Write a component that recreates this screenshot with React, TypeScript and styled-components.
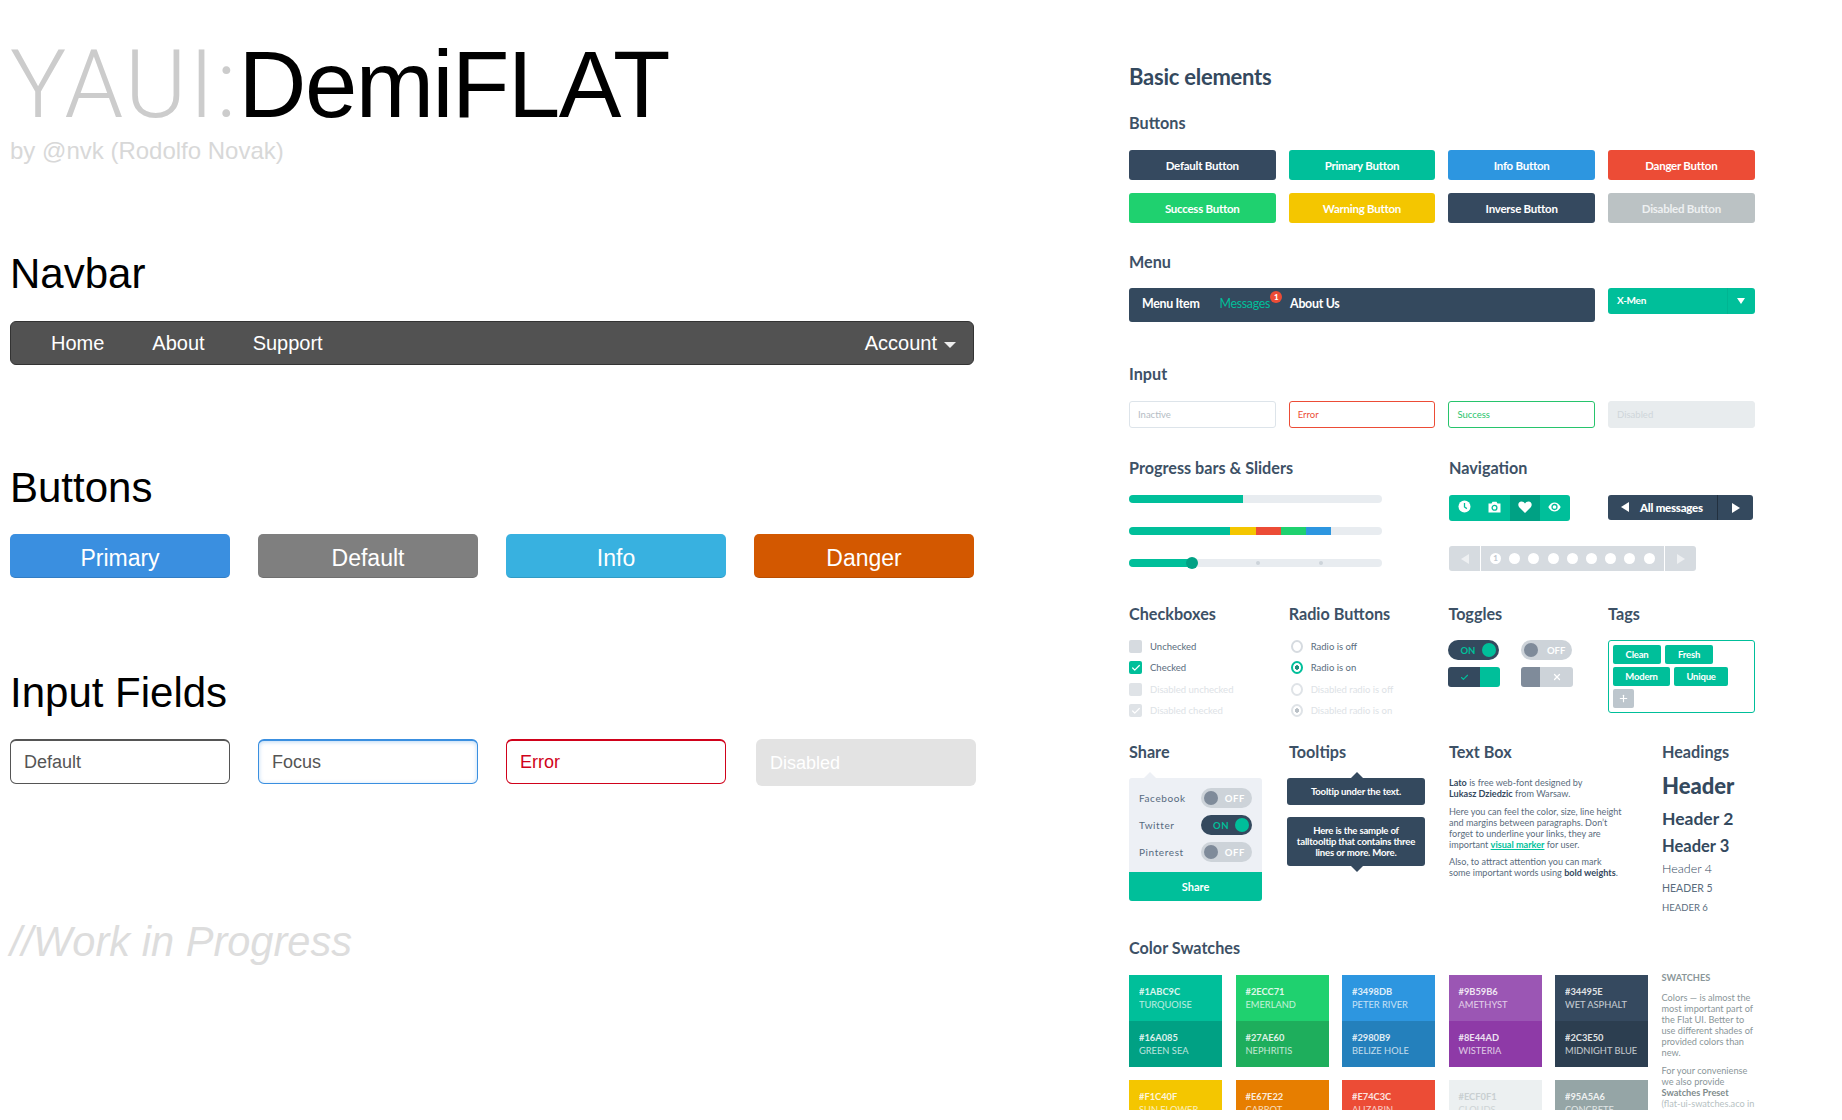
import React from 'react'
import styled, { createGlobalStyle } from 'styled-components'
import { Check, X, Plus } from 'lucide-react'

const GlobalStyle = createGlobalStyle`
  html, body { margin: 0; padding: 0; background: #fff; }
  * { box-sizing: border-box; }
`

const Page = styled.div`
  display: flex;
  width: 1842px;
  height: 1120px;
  overflow: hidden;
`

/* left column */
const LeftColumn = styled.div`
  width: 1129px;
  padding: 32px 0 0 10px;
  font-family: "Liberation Sans", Arial, sans-serif;
`

const Title = styled.h1`
  margin: 0;
  font-size: 94px;
  line-height: 106px;
  font-weight: 400;
  letter-spacing: -1.5px;
  color: #000;
  white-space: nowrap;
`

const TitleLight = styled.span`
  font-family: Roboto, sans-serif;
  font-weight: 300;
  color: #ccc;
  letter-spacing: 2.4px;
`

const Byline = styled.div`
  font-size: 24px;
  line-height: 28px;
  color: #d8d8d8;
  margin-top: -1px;
`

const SectionTitle = styled.h2<{ $top: number }>`
  margin: ${p => p.$top}px 0 0;
  font-size: 42px;
  line-height: 50px;
  font-weight: 400;
  color: #000;
`

const Navbar = styled.div`
  width: 964px;
  height: 44px;
  margin-top: 22px;
  padding: 0 17px 0 40px;
  display: flex;
  align-items: center;
  gap: 48px;
  background: #525252;
  border: 1px solid #333;
  border-radius: 6px;
`

const NavLink = styled.a<{ $right?: boolean }>`
  font-size: 20px;
  color: #fff;
  margin-left: ${p => (p.$right ? 'auto' : '0')};
  display: flex;
  align-items: center;
  gap: 7px;
`

const Caret = styled.span`
  width: 0;
  height: 0;
  margin-top: 4px;
  border-left: 6px solid transparent;
  border-right: 6px solid transparent;
  border-top: 6px solid #eee;
`

const FourUp = styled.div<{ $top: number }>`
  display: flex;
  gap: 28px;
  margin-top: ${p => p.$top}px;
`

const BigButton = styled.button<{ $bg: string }>`
  width: 220px;
  height: 44px;
  padding: 5px 0 0;
  border: 0;
  border-radius: 5px;
  border-bottom: 1px solid rgba(0, 0, 0, 0.12);
  background: ${p => p.$bg};
  color: #fff;
  font: 23px "Liberation Sans", Arial, sans-serif;
`

const BigInput = styled.div<{ $border?: string; $color?: string; $glow?: boolean }>`
  width: 220px;
  height: 45px;
  padding: 1px 0 0 13px;
  display: flex;
  align-items: center;
  border: 1px solid ${p => p.$border || '#555'};
  border-top-width: 2px;
  border-radius: 6px;
  color: ${p => p.$color || '#555'};
  font-size: 18px;
  ${p => (p.$glow ? 'box-shadow: inset 0 1px 4px rgba(58, 143, 224, 0.35);' : '')}
`

const BigInputDisabled = styled(BigInput)`
  margin-left: 2px;
  height: 47px;
  padding-left: 14px;
  border: 0;
  background: #e3e3e3;
  color: #fff;
`

const WorkInProgress = styled.div`
  margin-top: 131px;
  font-size: 41.6px;
  line-height: 50px;
  font-style: italic;
  color: #ddd;
`

/* right column */
const RightColumn = styled.div`
  width: 680px;
  height: 1110px;
  padding-top: 63px;
  overflow: hidden;
  font-family: Lato, sans-serif;
  color: #34495e;
`

const MainTitle = styled.h2`
  margin: 0;
  font-size: 22px;
  line-height: 28px;
  font-weight: 700;
  letter-spacing: -0.25px;
`

const SubTitle = styled.h3<{ $top?: number; $bottom?: number }>`
  margin: ${p => p.$top ?? 0}px 0 ${p => (p.$bottom ?? 17) + 1}px;
  font-size: 16.2px;
  line-height: 19px;
  font-weight: 700;
  color: #3d5166;
  white-space: nowrap;
`

const Grid4 = styled.div<{ $rowGap?: number; $top?: number }>`
  display: grid;
  width: 626px;
  grid-template-columns: repeat(4, 146.5px);
  column-gap: 13.2px;
  row-gap: ${p => p.$rowGap ?? 0}px;
  margin-top: ${p => p.$top ?? 0}px;
`

const FlatButton = styled.div<{ $bg: string; $fg?: string }>`
  height: 30px;
  display: flex;
  align-items: center;
  justify-content: center;
  border-radius: 3px;
  background: ${p => p.$bg};
  color: ${p => p.$fg || '#fff'};
  font-size: 11.5px;
  font-weight: 700;
  letter-spacing: -0.25px;
`

const MenuRow = styled.div`
  display: flex;
  gap: 13px;
  align-items: flex-start;
`

const MenuBar = styled.div`
  width: 466px;
  height: 34px;
  padding: 0 0 4px 13px;
  display: flex;
  align-items: center;
  border-radius: 3px;
  background: #34495e;
  color: #fff;
  font-size: 12.4px;
  font-weight: 700;
  letter-spacing: -0.3px;
`

const MenuItem = styled.span<{ $active?: boolean; $gap: number }>`
  margin-right: ${p => p.$gap}px;
  color: ${p => (p.$active ? '#00bf9a' : '#fff')};
  font-weight: ${p => (p.$active ? 400 : 700)};
  position: relative;
`

const Badge = styled.span`
  position: absolute;
  top: -5px;
  right: -12px;
  width: 12px;
  height: 12px;
  border-radius: 50%;
  background: #ec4c36;
  color: #fff;
  font-size: 8px;
  font-weight: 900;
  line-height: 12px;
  text-align: center;
`

const SelectBox = styled.div`
  width: 147px;
  height: 26px;
  display: flex;
  align-items: stretch;
  border-radius: 3px;
  background: #00bf9a;
  color: #fff;
  font-size: 10px;
  font-weight: 700;
  letter-spacing: -0.3px;
`

const SelectLabel = styled.span`
  flex: 1;
  padding: 0 0 2px 9px;
  display: flex;
  align-items: center;
`

const SelectArrow = styled.span`
  width: 28px;
  display: flex;
  align-items: center;
  justify-content: center;
  padding-right: 2px;
  border-left: 1px solid #00b592;
`

const DownTriangle = styled.span`
  border-left: 4px solid transparent;
  border-right: 4px solid transparent;
  border-top: 6px solid #fff;
`

const FlatInput = styled.div<{ $border?: string; $fg?: string; $bg?: string }>`
  height: 27px;
  padding-left: 8px;
  display: flex;
  align-items: center;
  border-radius: 3px;
  border: 1px solid ${p => p.$border || '#dde4ea'};
  color: ${p => p.$fg || '#b4bcc4'};
  background: ${p => p.$bg || '#fff'};
  font-size: 9.5px;
`

const TwoUp = styled.div`
  display: grid;
  grid-template-columns: 253px 1fr;
  column-gap: 67px;
  margin-top: 30px;
`

const TrackStack = styled.div`
  display: flex;
  flex-direction: column;
  gap: 24px;
`

const Track = styled.div`
  width: 253px;
  height: 8px;
  display: flex;
  border-radius: 4px;
  background: #e8ecf0;
  position: relative;
`

const TrackPart = styled.div<{ $bg: string; $w: number; $first?: boolean }>`
  width: ${p => p.$w}px;
  background: ${p => p.$bg};
  border-radius: ${p => (p.$first ? '4px 0 0 4px' : '0')};
`

const SliderHandle = styled.span`
  position: absolute;
  left: 57px;
  top: -2px;
  width: 12px;
  height: 12px;
  border-radius: 50%;
  background: #00a184;
`

const SliderTick = styled.span<{ $x: number }>`
  position: absolute;
  left: ${p => p.$x}px;
  top: 2px;
  width: 4px;
  height: 4px;
  border-radius: 50%;
  background: #cdd4da;
`

const NavColumns = styled.div`
  display: flex;
  flex-direction: column;
  gap: 25px;
`

const NavTop = styled.div`
  display: flex;
  gap: 38px;
`

const IconBar = styled.div`
  width: 121px;
  height: 26px;
  display: flex;
  border-radius: 3px;
  overflow: hidden;
  background: #00bf9a;
`

const IconCell = styled.span<{ $active?: boolean }>`
  flex: 1;
  display: flex;
  align-items: center;
  justify-content: center;
  padding-bottom: 3px;
  background: ${p => (p.$active ? '#00a184' : 'transparent')};
`

const MessagesBar = styled.div`
  width: 145px;
  height: 25px;
  display: flex;
  align-items: stretch;
  border-radius: 3px;
  background: #34495e;
  color: #fff;
  font-size: 11.5px;
  font-weight: 900;
  letter-spacing: -0.25px;
`

const MessagesLabel = styled.span`
  width: 110px;
  padding: 0 0 1px 13px;
  display: flex;
  align-items: center;
  gap: 11px;
  white-space: nowrap;
  border-right: 1px solid #22303f;
`

const MessagesNext = styled.span`
  flex: 1;
  display: flex;
  align-items: center;
  justify-content: center;
`

const Triangle = styled.span<{ $dir: 'left' | 'right'; $color: string; $size: number }>`
  width: 0;
  height: 0;
  border-top: ${p => p.$size}px solid transparent;
  border-bottom: ${p => p.$size}px solid transparent;
  ${p => (p.$dir === 'left' ? 'border-right' : 'border-left')}: ${p => p.$size * 1.6}px solid ${p => p.$color};
`

const Pager = styled.div`
  width: 247px;
  height: 25px;
  display: flex;
  align-items: center;
  border-radius: 3px;
  background: #d6dbe0;
`

const PagerEnd = styled.span<{ $left?: boolean }>`
  width: 32px;
  height: 25px;
  display: flex;
  align-items: center;
  justify-content: center;
  ${p => (p.$left ? 'border-right: 1px solid #fff;' : 'border-left: 1px solid #fff;')}
`

const PagerDots = styled.span`
  flex: 1;
  display: flex;
  align-items: center;
  gap: 8.2px;
  padding-left: 9px;
`

const PagerDot = styled.span`
  width: 11px;
  height: 11px;
  border-radius: 50%;
  background: #fff;
  color: #c2c9d0;
  font-size: 8px;
  font-weight: 900;
  line-height: 11px;
  text-align: center;
`

const OptionList = styled.div`
  margin-top: -4px;
  height: 76px;
`

const OptionRow = styled.div<{ $disabled?: boolean }>`
  height: 21.3px;
  display: flex;
  align-items: center;
  gap: 8px;
  font-size: 9.5px;
  white-space: nowrap;
  color: ${p => (p.$disabled ? '#dde2e6' : '#5a6c7d')};
`

const CheckMark = styled.span<{ $on?: boolean; $disabled?: boolean }>`
  width: 13px;
  height: 13px;
  flex: none;
  display: flex;
  align-items: center;
  justify-content: center;
  border-radius: 2px;
  background: ${p => (p.$on && !p.$disabled ? '#00bf9a' : p.$disabled ? '#dfe3e7' : '#d6dbe0')};
`

const RadioMark = styled.span<{ $color: string; $dot?: string; $width: number }>`
  width: 12px;
  height: 13px;
  flex: none;
  margin-left: 2px;
  border-radius: 50%;
  border: ${p => p.$width}px solid ${p => p.$color};
  background: ${p => (p.$dot ? `radial-gradient(circle, ${p.$dot} 0 2px, #fff 2.4px)` : '#fff')};
`

const ToggleGrid = styled.div`
  display: grid;
  grid-template-columns: 52px 52px;
  column-gap: 21px;
  row-gap: 7px;
`

const Pill = styled.div<{ $on?: boolean }>`
  width: 51px;
  height: 20px;
  padding: 0 3px 0 ${p => (p.$on ? '12px' : '3px')};
  display: flex;
  align-items: center;
  justify-content: space-between;
  border-radius: 10px;
  background: ${p => (p.$on ? '#34495e' : '#cdd3d9')};
  color: ${p => (p.$on ? '#00bf9a' : '#fff')};
  font-size: 9.5px;
  font-weight: 700;
`

const PillKnob = styled.span<{ $on?: boolean }>`
  width: 14px;
  height: 14px;
  border-radius: 50%;
  background: ${p => (p.$on ? '#00bf9a' : '#7f8b9a')};
`

const PillText = styled.span<{ $on?: boolean }>`
  margin-right: ${p => (p.$on ? '0' : '4px')};
`

const SquareToggle = styled.div`
  width: 52px;
  height: 20px;
  display: flex;
  border-radius: 3px;
  overflow: hidden;
`

const SquareHalf = styled.span<{ $bg: string; $w: number }>`
  width: ${p => p.$w}px;
  display: flex;
  align-items: center;
  justify-content: center;
  background: ${p => p.$bg};
`

const TagBox = styled.div`
  height: 73px;
  padding: 4px;
  display: flex;
  flex-wrap: wrap;
  align-content: flex-start;
  gap: 3px 4px;
  border: 1px solid #00bf9a;
  border-radius: 3px;
`

const Tag = styled.span<{ $w: number }>`
  width: ${p => p.$w}px;
  height: 19px;
  display: flex;
  align-items: center;
  justify-content: center;
  border-radius: 2px;
  background: #00bf9a;
  color: #fff;
  font-size: 9.5px;
  font-weight: 700;
  letter-spacing: -0.2px;
`

const TagAdd = styled.span`
  width: 21px;
  height: 19px;
  display: flex;
  align-items: center;
  justify-content: center;
  border-radius: 2px;
  background: #bdc6cd;
`

const LowerGrid = styled.div`
  display: grid;
  width: 626px;
  grid-template-columns: 147px 147px 200px 1fr;
  column-gap: 13px;
  margin-top: 29px;
`

const ShareCard = styled.div`
  width: 133px;
  height: 123px;
  display: flex;
  flex-direction: column;
  border-radius: 3px;
  background: #edf0f5;
  position: relative;
  &::before {
    content: '';
    position: absolute;
    left: 15px;
    top: -6px;
    border-left: 6px solid transparent;
    border-right: 6px solid transparent;
    border-bottom: 6px solid #edf0f5;
  }
`

const ShareRows = styled.div`
  flex: 1;
  padding: 10px 10px 0;
  display: flex;
  flex-direction: column;
  gap: 7px;
`

const ShareRow = styled.div`
  display: flex;
  align-items: center;
  justify-content: space-between;
  font-size: 10px;
  letter-spacing: 0.6px;
  color: #566a7e;
`

const ShareButton = styled.div`
  height: 29px;
  display: flex;
  align-items: center;
  justify-content: center;
  border-radius: 0 0 3px 3px;
  background: #00bf9a;
  color: #fff;
  font-size: 11px;
  font-weight: 700;
`

const TipStack = styled.div`
  width: 138px;
  margin-left: -2px;
  display: flex;
  flex-direction: column;
  gap: 12px;
`

const Tip = styled.div<{ $pointer: 'up' | 'down'; $h: number }>`
  height: ${p => p.$h}px;
  padding: 0 8px;
  display: flex;
  align-items: center;
  justify-content: center;
  text-align: center;
  border-radius: 3px;
  background: #34495e;
  color: #fff;
  font-size: 9.6px;
  line-height: 11px;
  font-weight: 700;
  letter-spacing: -0.2px;
  position: relative;
  &::after {
    content: '';
    position: absolute;
    left: 64px;
    ${p => (p.$pointer === 'up' ? 'top: -6px;' : 'bottom: -6px;')}
    border-left: 6px solid transparent;
    border-right: 6px solid transparent;
    ${p => (p.$pointer === 'up' ? 'border-bottom' : 'border-top')}: 6px solid #34495e;
  }
`

const TextCopy = styled.div`
  width: 190px;
  margin-top: -1px;
  font-size: 9.1px;
  line-height: 11px;
  color: #5a6c7d;
`

const CopyPara = styled.p`
  margin: 0 0 6.5px;
  white-space: nowrap;
`

const Strong = styled.b`
  font-weight: 700;
  color: #34495e;
`

const MarkerLink = styled.a`
  color: #00bf9a;
  font-weight: 700;
  text-decoration: underline;
`

const HeadingStack = styled.div`
  margin-top: -10px;
  height: 123px;
`

const SampleHeading = styled.div<{ $size: number; $weight: number; $h: number; $light?: boolean }>`
  font-size: ${p => p.$size}px;
  font-weight: ${p => p.$weight};
  line-height: ${p => p.$h}px;
  color: ${p => (p.$light ? '#5a6c7d' : '#34495e')};
  white-space: nowrap;
`

const SwatchGrid = styled.div`
  display: grid;
  grid-template-columns: repeat(5, 93px) 110px;
  grid-auto-rows: 92px;
  column-gap: 13.5px;
  row-gap: 13px;
`

const SwatchCell = styled.div`
  display: flex;
  flex-direction: column;
`

const SwatchPart = styled.div<{ $bg: string; $fg?: string }>`
  height: 46px;
  padding: 10px 0 0 10px;
  background: ${p => p.$bg};
  color: ${p => p.$fg || '#fff'};
  font-size: 9.3px;
  line-height: 13px;
`

const SwatchHex = styled.div`
  font-weight: 700;
  opacity: 0.85;
`

const SwatchName = styled.div`
  opacity: 0.72;
  white-space: nowrap;
`

const SwatchNotes = styled.div`
  grid-column: 6;
  grid-row: 1 / span 2;
  margin-top: -3px;
  font-size: 9.2px;
  line-height: 11px;
  color: #8a9699;
  white-space: nowrap;
`

const NotesTitle = styled.div`
  margin-bottom: 9px;
  font-weight: 700;
`

const NotesPara = styled.p`
  margin: 0 0 7px;
`

const NotesStrong = styled.b`
  font-weight: 700;
  color: #7f8c8d;
`

const NotesFaint = styled.span`
  color: #b6bfc2;
`

const swatches = [
  [['#00bf9a', '#1ABC9C', 'TURQUOISE'], ['#00a184', '#16A085', 'GREEN SEA']],
  [['#1fd16f', '#2ECC71', 'EMERLAND'], ['#1eae5c', '#27AE60', 'NEPHRITIS']],
  [['#2d96e0', '#3498DB', 'PETER RIVER'], ['#2480bc', '#2980B9', 'BELIZE HOLE']],
  [['#9b56b4', '#9B59B6', 'AMETHYST'], ['#8e3aa7', '#8E44AD', 'WISTERIA']],
  [['#35495f', '#34495E', 'WET ASPHALT'], ['#2c3e50', '#2C3E50', 'MIDNIGHT BLUE']],
  [['#f4c600', '#F1C40F', 'SUN FLOWER'], ['#f0ab00', '#F39C12', 'ORANGE']],
  [['#e77e00', '#E67E22', 'CARROT'], ['#d35400', '#D35400', 'PUMPKIN']],
  [['#ec4c36', '#E74C3C', 'ALIZARIN'], ['#c0392b', '#C0392B', 'POMEGRANATE']],
  [['#ecf0f1', '#ECF0F1', 'CLOUDS'], ['#bdc3c7', '#BDC3C7', 'SILVER']],
  [['#95a5a6', '#95A5A6', 'CONCRETE'], ['#7f8c8d', '#7F8C8D', 'ASBESTOS']],
]

function Toggle({ on }: { on?: boolean }) {
  return on ? (
    <Pill $on>
      <PillText $on>ON</PillText>
      <PillKnob $on />
    </Pill>
  ) : (
    <Pill>
      <PillKnob />
      <PillText>OFF</PillText>
    </Pill>
  )
}

const ClockIcon = () => (
  <svg width="13" height="13" viewBox="0 0 13 13">
    <circle cx="6.5" cy="6.5" r="6" fill="#fff" />
    <path d="M6.5 3v4l2.4 1.6" fill="none" stroke="#00bf9a" strokeWidth="1.3" />
  </svg>
)

const CameraIcon = () => (
  <svg width="13" height="12" viewBox="0 0 13 12">
    <path d="M0.5 2.5h3l1-1.8h4l1 1.8h3v9h-12z" fill="#fff" />
    <circle cx="6.5" cy="6.8" r="2.4" fill="none" stroke="#00bf9a" strokeWidth="1.3" />
  </svg>
)

const HeartIcon = () => (
  <svg width="14" height="12" viewBox="0 0 14 12">
    <path d="M7 12L1.2 6.2C-0.6 4.2 0.4 0.6 3.5 0.5 5 0.5 6.3 1.3 7 2.6 7.7 1.3 9 0.5 10.5 0.5c3.1 0.1 4.1 3.7 2.3 5.7z" fill="#fff" />
  </svg>
)

const EyeIcon = () => (
  <svg width="13" height="10" viewBox="0 0 13 10">
    <path d="M0.3 5C2 1.7 4.2 0.5 6.5 0.5S11 1.7 12.7 5C11 8.3 8.8 9.5 6.5 9.5S2 8.3 0.3 5z" fill="#fff" />
    <circle cx="6.5" cy="5" r="2.5" fill="none" stroke="#00bf9a" strokeWidth="1.3" />
  </svg>
)

export default function App() {
  return (
    <Page>
      <GlobalStyle />
      <LeftColumn>
        <Title>
          <TitleLight>YAUI:</TitleLight>DemiFLAT
        </Title>
        <Byline>by @nvk (Rodolfo Novak)</Byline>

        <SectionTitle $top={84}>Navbar</SectionTitle>
        <Navbar>
          <NavLink>Home</NavLink>
          <NavLink>About</NavLink>
          <NavLink>Support</NavLink>
          <NavLink $right>
            Account <Caret />
          </NavLink>
        </Navbar>

        <SectionTitle $top={98}>Buttons</SectionTitle>
        <FourUp $top={21}>
          <BigButton $bg="#3a8fe0">Primary</BigButton>
          <BigButton $bg="#7f7f7f">Default</BigButton>
          <BigButton $bg="#38b1e0">Info</BigButton>
          <BigButton $bg="#d35800">Danger</BigButton>
        </FourUp>

        <SectionTitle $top={90}>Input Fields</SectionTitle>
        <FourUp $top={21}>
          <BigInput>Default</BigInput>
          <BigInput $border="#3a8fe0" $glow>
            Focus
          </BigInput>
          <BigInput $border="#d0021b" $color="#d0021b">
            Error
          </BigInput>
          <BigInputDisabled>Disabled</BigInputDisabled>
        </FourUp>

        <WorkInProgress>//Work in Progress</WorkInProgress>
      </LeftColumn>

      <RightColumn>
        <MainTitle>Basic elements</MainTitle>

        <SubTitle $top={22}>Buttons</SubTitle>
        <Grid4 $rowGap={13}>
          <FlatButton $bg="#35495f">Default Button</FlatButton>
          <FlatButton $bg="#00bf9a">Primary Button</FlatButton>
          <FlatButton $bg="#2d96e0">Info Button</FlatButton>
          <FlatButton $bg="#ec4c36">Danger Button</FlatButton>
          <FlatButton $bg="#1fd16f">Success Button</FlatButton>
          <FlatButton $bg="#f4c600">Warning Button</FlatButton>
          <FlatButton $bg="#35495f">Inverse Button</FlatButton>
          <FlatButton $bg="#bbc2c4" $fg="#eef0f1">
            Disabled Button
          </FlatButton>
        </Grid4>

        <SubTitle $top={29} $bottom={16}>
          Menu
        </SubTitle>
        <MenuRow>
          <MenuBar>
            <MenuItem $gap={20}>Menu Item</MenuItem>
            <MenuItem $gap={20} $active>
              Messages
              <Badge>1</Badge>
            </MenuItem>
            <MenuItem $gap={0}>About Us</MenuItem>
          </MenuBar>
          <SelectBox>
            <SelectLabel>X-Men</SelectLabel>
            <SelectArrow>
              <DownTriangle />
            </SelectArrow>
          </SelectBox>
        </MenuRow>

        <SubTitle $top={42}>Input</SubTitle>
        <Grid4>
          <FlatInput>Inactive</FlatInput>
          <FlatInput $border="#ec4c36" $fg="#ec4c36">
            Error
          </FlatInput>
          <FlatInput $border="#27c46c" $fg="#27c46c">
            Success
          </FlatInput>
          <FlatInput $border="#e8ecee" $bg="#e8ecee" $fg="#cfd6da">
            Disabled
          </FlatInput>
        </Grid4>

        <TwoUp>
          <div>
            <SubTitle>Progress bars &amp; Sliders</SubTitle>
            <TrackStack>
              <Track>
                <TrackPart $bg="#00bf9a" $w={114} $first />
              </Track>
              <Track>
                <TrackPart $bg="#00bf9a" $w={101} $first />
                <TrackPart $bg="#f4c600" $w={26} />
                <TrackPart $bg="#ec4c36" $w={25} />
                <TrackPart $bg="#1fd16f" $w={25} />
                <TrackPart $bg="#2d96e0" $w={25} />
              </Track>
              <Track>
                <TrackPart $bg="#00bf9a" $w={62} $first />
                <SliderTick $x={127} />
                <SliderTick $x={190} />
                <SliderHandle />
              </Track>
            </TrackStack>
          </div>
          <div>
            <SubTitle>Navigation</SubTitle>
            <NavColumns>
              <NavTop>
                <IconBar>
                  <IconCell><ClockIcon /></IconCell>
                  <IconCell><CameraIcon /></IconCell>
                  <IconCell $active><HeartIcon /></IconCell>
                  <IconCell><EyeIcon /></IconCell>
                </IconBar>
                <MessagesBar>
                  <MessagesLabel>
                    <Triangle $dir="left" $color="#fff" $size={5} />
                    All messages
                  </MessagesLabel>
                  <MessagesNext>
                    <Triangle $dir="right" $color="#fff" $size={5} />
                  </MessagesNext>
                </MessagesBar>
              </NavTop>
              <Pager>
                <PagerEnd $left>
                  <Triangle $dir="left" $color="#eef0f2" $size={5} />
                </PagerEnd>
                <PagerDots>
                  <PagerDot>1</PagerDot>
                  {[2, 3, 4, 5, 6, 7, 8, 9].map(n => (
                    <PagerDot key={n} />
                  ))}
                </PagerDots>
                <PagerEnd>
                  <Triangle $dir="right" $color="#eef0f2" $size={5} />
                </PagerEnd>
              </Pager>
            </NavColumns>
          </div>
        </TwoUp>

        <Grid4 $top={33}>
          <div>
            <SubTitle $bottom={16}>Checkboxes</SubTitle>
            <OptionList>
              <OptionRow>
                <CheckMark />
                Unchecked
              </OptionRow>
              <OptionRow>
                <CheckMark $on>
                  <Check size={10} color="#fff" strokeWidth={3} />
                </CheckMark>
                Checked
              </OptionRow>
              <OptionRow $disabled>
                <CheckMark $disabled />
                Disabled unchecked
              </OptionRow>
              <OptionRow $disabled>
                <CheckMark $disabled>
                  <Check size={10} color="#fff" strokeWidth={3} />
                </CheckMark>
                Disabled checked
              </OptionRow>
            </OptionList>
          </div>
          <div>
            <SubTitle $bottom={16}>Radio Buttons</SubTitle>
            <OptionList>
              <OptionRow>
                <RadioMark $color="#d6dbe0" $width={2} />
                Radio is off
              </OptionRow>
              <OptionRow>
                <RadioMark $color="#00bf9a" $dot="#1f8f7c" $width={2.5} />
                Radio is on
              </OptionRow>
              <OptionRow $disabled>
                <RadioMark $color="#dfe3e7" $width={2} />
                Disabled radio is off
              </OptionRow>
              <OptionRow $disabled>
                <RadioMark $color="#dfe3e7" $dot="#b9c0c6" $width={2.5} />
                Disabled radio is on
              </OptionRow>
            </OptionList>
          </div>
          <div>
            <SubTitle $bottom={16}>Toggles</SubTitle>
            <ToggleGrid>
              <Toggle on />
              <Toggle />
              <SquareToggle>
                <SquareHalf $bg="#34495e" $w={32}>
                  <Check size={9} color="#00bf9a" strokeWidth={3} />
                </SquareHalf>
                <SquareHalf $bg="#00bf9a" $w={20} />
              </SquareToggle>
              <SquareToggle>
                <SquareHalf $bg="#7f8b9a" $w={19} />
                <SquareHalf $bg="#cdd3d9" $w={33}>
                  <X size={10} color="#fff" strokeWidth={3} />
                </SquareHalf>
              </SquareToggle>
            </ToggleGrid>
          </div>
          <div>
            <SubTitle $bottom={16}>Tags</SubTitle>
            <TagBox>
              <Tag $w={48}>Clean</Tag>
              <Tag $w={48}>Fresh</Tag>
              <Tag $w={57}>Modern</Tag>
              <Tag $w={54}>Unique</Tag>
              <TagAdd>
                <Plus size={11} color="#fff" strokeWidth={2.5} />
              </TagAdd>
            </TagBox>
          </div>
        </Grid4>

        <LowerGrid>
          <div>
            <SubTitle $bottom={16}>Share</SubTitle>
            <ShareCard>
              <ShareRows>
                <ShareRow>Facebook<Toggle /></ShareRow>
                <ShareRow>Twitter<Toggle on /></ShareRow>
                <ShareRow>Pinterest<Toggle /></ShareRow>
              </ShareRows>
              <ShareButton>Share</ShareButton>
            </ShareCard>
          </div>
          <div>
            <SubTitle $bottom={16}>Tooltips</SubTitle>
            <TipStack>
              <Tip $pointer="up" $h={27}>Tooltip under the text.</Tip>
              <Tip $pointer="down" $h={49}>
                Here is the sample of talltooltip that contains three lines or more. More.
              </Tip>
            </TipStack>
          </div>
          <div>
            <SubTitle $bottom={16}>Text Box</SubTitle>
            <TextCopy>
              <CopyPara>
                <Strong>Lato</Strong> is free web-font designed by
                <br />
                <Strong>Lukasz Dziedzic</Strong> from Warsaw.
              </CopyPara>
              <CopyPara>
                Here you can feel the color, size, line height
                <br />
                and margins between paragraphs. Don’t
                <br />
                forget to underline your links, they are
                <br />
                important <MarkerLink>visual marker</MarkerLink> for user.
              </CopyPara>
              <CopyPara>
                Also, to attract attention you can mark
                <br />
                some important words using <Strong>bold weights</Strong>.
              </CopyPara>
            </TextCopy>
          </div>
          <div>
            <SubTitle $bottom={16}>Headings</SubTitle>
            <HeadingStack>
              <SampleHeading $size={22} $weight={900} $h={36}>Header</SampleHeading>
              <SampleHeading $size={17.5} $weight={700} $h={30}>Header 2</SampleHeading>
              <SampleHeading $size={16.5} $weight={700} $h={24}>Header 3</SampleHeading>
              <SampleHeading $size={12.5} $weight={300} $h={21}>Header 4</SampleHeading>
              <SampleHeading $size={10.5} $weight={400} $h={19} $light>HEADER 5</SampleHeading>
              <SampleHeading $size={9.5} $weight={400} $h={19} $light>HEADER 6</SampleHeading>
            </HeadingStack>
          </div>
        </LowerGrid>

        <SubTitle $top={37}>Color Swatches</SubTitle>
        <SwatchGrid>
          {swatches.slice(0, 5).map(pair => (
            <SwatchCell key={pair[0][1]}>
              {pair.map(([bg, hex, name]) => (
                <SwatchPart key={hex} $bg={bg}>
                  <SwatchHex>#{hex.slice(1)}</SwatchHex>
                  <SwatchName>{name}</SwatchName>
                </SwatchPart>
              ))}
            </SwatchCell>
          ))}
          <SwatchNotes>
            <NotesTitle>SWATCHES</NotesTitle>
            <NotesPara>
              Colors — is almost the
              <br />
              most important part of
              <br />
              the Flat UI. Better to
              <br />
              use different shades of
              <br />
              provided colors than
              <br />
              new.
            </NotesPara>
            <NotesPara>
              For your conveniense
              <br />
              we also provide
              <br />
              <NotesStrong>Swatches Preset</NotesStrong>
              <br />
              <NotesFaint>(flat-ui-swatches.aco in</NotesFaint>
            </NotesPara>
          </SwatchNotes>
          {swatches.slice(5).map(pair => (
            <SwatchCell key={pair[0][1]}>
              {pair.map(([bg, hex, name]) => (
                <SwatchPart key={hex} $bg={bg} $fg={hex === '#ECF0F1' ? '#c3cacc' : undefined}>
                  <SwatchHex>#{hex.slice(1)}</SwatchHex>
                  <SwatchName>{name}</SwatchName>
                </SwatchPart>
              ))}
            </SwatchCell>
          ))}
        </SwatchGrid>
      </RightColumn>
    </Page>
  )
}
